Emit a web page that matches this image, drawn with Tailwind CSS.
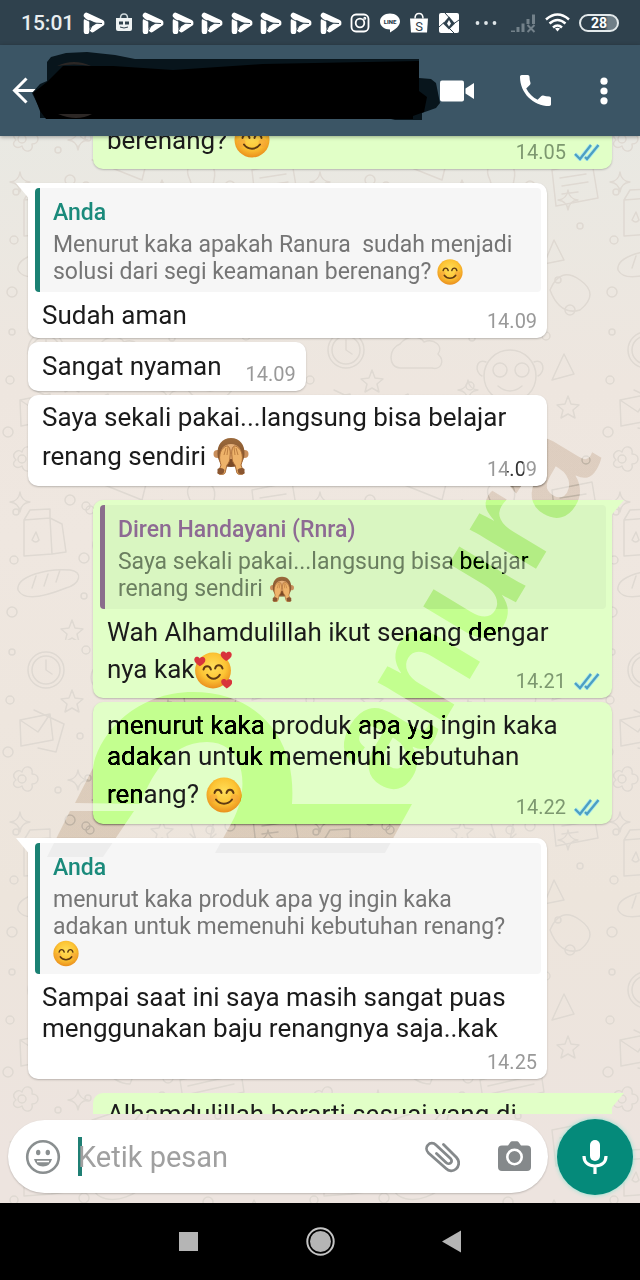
<!DOCTYPE html>
<html lang="id">
<head>
<meta charset="utf-8">
<meta name="viewport" content="width=device-width, initial-scale=1">
<title>Chat</title>
<script src="https://cdn.jsdelivr.net/npm/@tailwindcss/browser@4"></script>
</head>
<body class="relative flex h-screen flex-col overflow-hidden bg-[#efe7df] font-[Roboto,'Liberation_Sans',sans-serif] text-[26px] leading-[31px] text-[#1b1b1b]">

<!-- shared icons -->
<svg class="absolute size-0" aria-hidden="true">
  <defs>
    <radialGradient id="face" cx=".5" cy=".4" r=".6"><stop offset="0" stop-color="#ffdf5a"/><stop offset=".6" stop-color="#fcc434"/><stop offset="1" stop-color="#ea8f1d"/></radialGradient>
    <linearGradient id="fur" x1="0" y1="0" x2="0" y2="1"><stop offset="0" stop-color="#9b6a3c"/><stop offset="1" stop-color="#7a4a26"/></linearGradient>
    <symbol id="smile" viewBox="0 0 36 36">
      <circle cx="18" cy="18" r="17.5" fill="url(#face)"/>
      <circle cx="7.5" cy="21" r="4" fill="#f59a3c" opacity=".45"/><circle cx="28.5" cy="21" r="4" fill="#f59a3c" opacity=".45"/>
      <path d="M8.5 16c1-4.500 6-4.500 7 0M20.500 16c1-4.500 6-4.500 7 0M10 22.500c4 5.500 12 5.500 16 0" fill="none" stroke="#5f3a12" stroke-width="2" stroke-linecap="round"/>
    </symbol>
    <symbol id="love" viewBox="0 0 36 36">
      <circle cx="18" cy="18.500" r="17" fill="url(#face)"/>
      <path d="M9 17.500c1-4 6-4 7 0M20 16.500c1-4 6-4 7 0M12.500 22.500c3 5 9 5 12 0" fill="none" stroke="#5f3a12" stroke-width="1.900" stroke-linecap="round"/>
      <g fill="#d8343c"><path id="heart" d="M5.500 14.500C1 11.500-.5 9 .6 6.800c1.200-2 3.900-1.600 4.900.3 1.400-2 4.300-1.800 5.100.4.700 2.500-1.300 4.700-5.100 7z"/><use href="#heart" x="25" y="-5"/><use href="#heart" x="25.500" y="21"/></g>
    </symbol>
    <symbol id="monkey" viewBox="0 0 36 38">
      <circle cx="4.500" cy="17" r="4" fill="#c98f5c"/><circle cx="31.500" cy="17" r="4" fill="#c98f5c"/>
      <path d="M18 1C9 1 4 8 4.500 17c.3 7 4 13 13.500 13s13.200-6 13.500-13C32 8 27 1 18 1z" fill="url(#fur)"/>
      <path d="M18 7c-7 0-11 5-10 11 1 7 4 11 10 11s9-4 10-11c1-6-3-11-10-11z" fill="#e5b079"/>
      <path d="M15 22h6l3 7H12z" fill="#7a4a26"/>
      <path d="M17 20c1-8-1-11-3-11s-6 3-7 8 0 8 1 11l-3 8c1 2 6 2 7 0l2-8c2-2 3-5 3-8zM19 20c-1-8 1-11 3-11s6 3 7 8 0 8-1 11l3 8c-1 2-6 2-7 0l-2-8c-2-2-3-5-3-8z" fill="#eeb36a" stroke="#a86a35" stroke-width="1"/>
      <path d="M4.500 32c2-2 6-1 7 1l-1 3.500c-2 1-5 1-6 0zM31.500 32c-2-2-6-1-7 1l1 3.500c2 1 5 1 6 0z" fill="#8a5630"/>
      <path d="M11 18l2-7M14 18l1-8M25 18l-2-7M22 18l-1-8" stroke="#b8783c" stroke-width=".9"/>
    </symbol>
    <symbol id="ticks" viewBox="0 0 26 18">
      <path d="M1 11l5 5L17 2M11 14l2 2L24.500 2" fill="none" stroke="#a9e9ee" stroke-width="4"/>
      <path d="M1 11l5 5L17 2M11 14l2 2L24.500 2" fill="none" stroke="#4c9ec2" stroke-width="2.200"/>
    </symbol>
    <symbol id="play" viewBox="0 0 22 22">
      <path d="M3.500 3.500L18.500 10.500M3.500 9v10.500M18.500 11.500L9.500 17.500" fill="none" stroke="#fff" stroke-width="5.600" stroke-linecap="round" stroke-linejoin="round"/>
      <path d="M1 6.500l9 4.500-3 7M10 11l9 .5" fill="none" stroke="#2f414d" stroke-width="1"/>
    </symbol>
    <symbol id="tail-in" viewBox="0 0 14 18"><path d="M0 0h14v18Q12 14 10 12Z" fill="#fff"/></symbol>
    <symbol id="tail-out" viewBox="0 0 14 18"><path d="M14 0H0v18Q2 14 4 12Z" fill="#e1ffc7"/></symbol>
    <linearGradient id="paper" x1="0" y1="0" x2="0" y2="1"><stop offset=".1" stop-color="#e9e9e3"/><stop offset=".3" stop-color="#eee6df"/><stop offset=".42" stop-color="#efe7e0"/><stop offset=".7" stop-color="#ede5dc"/><stop offset=".9" stop-color="#ede4df"/></linearGradient>
    <pattern id="doodles" width="300" height="320" patternUnits="userSpaceOnUse">
      <g fill="none" stroke="#dfd9d2" stroke-width="1.500" stroke-linecap="round" stroke-linejoin="round">
        <circle cx="46" cy="30" r="18"/><circle cx="46" cy="30" r="14"/><path d="M46 20v10l6 4"/>
        <path d="M20 80l30-6 3 26-32 6zM20 80l18 12 12-18M34 70l30 14-8 28-18-4"/>
        <path d="M16 140c-6-6 2-12 6-8 2-8 12-6 10 2 8 0 8 10 0 10 2 8-8 10-10 2-6 4-12-2-6-6z"/><circle cx="22" cy="139" r="4"/>
        <path d="M24 200l26-2 2 36-28 2zM50 198l12 6 4 28-14 2M24 200l6-10 20-1v9M36 212l-4 8q4 4 7 0z"/>
        <path d="M18 270c-2-14 30-22 52-20 14 2 10 14-4 18-20 8-42 14-48 2zM32 268l4-12M44 266l4-12M56 262l4-12"/>
        <path d="M100 24c8-10 20-8 24-2 10-4 20 4 14 12 8 8 2 16-6 14H100c-12 0-12-20 0-24z"/>
        <path d="M96 80c-2 18 14 44 34 44l4-10-12-8-6 4c-4-4-8-12-10-18l6-4-4-14z"/>
        <path d="M150 96c-12-8-10-18-4-18 4 0 6 4 6 6 0-4 4-8 8-6 6 2 4 12-10 18z"/>
        <path d="M92 160l60-20-10 40zM92 160l40 4 20-24"/>
        <ellipse cx="120" cy="220" rx="28" ry="18" transform="rotate(-20 120 220)"/><ellipse cx="120" cy="220" rx="10" ry="5" transform="rotate(-20 120 220)"/>
        <path d="M96 290l40-14 6 20-40 16zM102 292l30-10M104 298l30-10"/>
        <circle cx="210" cy="56" r="26"/><circle cx="200" cy="50" r="7"/><circle cx="222" cy="50" r="7"/><path d="M198 66q12 10 24 0M186 42c-10-4-12 10-4 14M234 42c10-4 12 10 4 14"/>
        <path d="M180 120l60-14 4 26-60 14zM188 126l44-10M190 134l44-10"/>
        <path d="M190 180q-8-16 10-18 18 0 14 18l-4 20h-14zM202 200v20M190 194q12 14 26 0"/>
        <path d="M252 170l40-8 6 36-42 8zM260 178l26-4M262 186l26-4M262 194l16-2"/>
        <path d="M180 260c10-20 40-20 40 0 10 0 20 8 14 20h-48c-14 0-14-16-6-20zM196 280v24M220 280l6 24"/>
        <path d="M254 240l10 20-20 4zM264 34l10 20-22 6zM250 290q10-24 30-10t0 30q-20 6-30-20z"/>
        <path id="star" d="M72 50l3 8 8 1-6 5 2 8-7-4-7 4 2-8-6-5 8-1z"/><use href="#star" x="90" y="130"/><use href="#star" x="196" y="26"/><use href="#star" x="0" y="250"/>
        <path id="spark" d="M78 130q1 9 10 10-9 1-10 10-1-9-10-10 9-1 10-10z"/><use href="#spark" x="90" y="-70"/><use href="#spark" x="76" y="130"/><use href="#spark" x="190" y="60"/><use href="#spark" x="-58" y="42"/>
        <g id="dots"><circle cx="10" cy="60" r="4"/><circle cx="80" cy="96" r="3"/><circle cx="8" cy="112" r="5"/><circle cx="70" cy="180" r="5"/><circle cx="58" cy="150" r="3"/><circle cx="86" cy="10" r="4"/><circle cx="12" cy="12" r="3"/></g>
        <use href="#dots" x="76" y="126"/><use href="#dots" x="160" y="6"/><use href="#dots" x="200" y="130"/><use href="#dots" x="4" y="180"/>
      </g>
    </pattern>
  </defs>
</svg>

<!-- wallpaper -->
<svg class="absolute inset-0 h-full w-full" aria-hidden="true"><rect width="100%" height="100%" fill="url(#paper)"/><rect width="100%" height="100%" fill="url(#doodles)"/></svg>

<!-- status bar -->
<div class="relative z-10 flex h-[45px] shrink-0 items-center bg-[#2f414d] pr-[21px] pl-[21px] text-white">
  <span class="w-[62px] text-[21px] leading-6 font-medium text-[#e9eef0]">15:01</span>
  <div class="flex w-[377px] items-center justify-between">
    <svg class="size-[22px]"><use href="#play"/></svg>
    <svg class="size-[22px]" viewBox="0 0 22 22"><path d="M3 6h16v11q0 2-2 2H5q-2 0-2-2z" fill="#eef2f3"/><path d="M7.500 6q0-4 3.500-4t3.500 4" fill="none" stroke="#cfd8dc" stroke-width="1.500"/><path d="M6 9.500h4v3H6zM12 9.500h4v3h-4z" fill="#2f414d"/><path d="M7 15q4 2 8 0" fill="none" stroke="#2f414d" stroke-width="1"/></svg>
    <svg class="size-[22px]"><use href="#play"/></svg>
    <svg class="size-[22px]"><use href="#play"/></svg>
    <svg class="size-[22px]"><use href="#play"/></svg>
    <svg class="size-[22px]"><use href="#play"/></svg>
    <svg class="size-[22px]"><use href="#play"/></svg>
    <svg class="size-[22px]"><use href="#play"/></svg>
    <svg class="size-[22px]"><use href="#play"/></svg>
    <svg class="size-[22px]" viewBox="0 0 22 22" fill="none" stroke="#fff" stroke-width="1.800"><rect x="2.500" y="2.500" width="17" height="17" rx="4.500"/><circle cx="11" cy="11" r="4.300"/><circle cx="15.800" cy="6.200" r=".6"/></svg>
    <svg class="size-[22px]" viewBox="0 0 22 22"><path d="M11 1.500c5.500 0 10 3.500 10 8 0 4-4.500 8-10 11v-3C5.500 17.500 1 14 1 9.500s4.500-8 10-8z" fill="#fff"/><text x="11" y="12" text-anchor="middle" font-size="6" font-weight="900" fill="#2f414d">LINE</text></svg>
    <svg class="size-[22px]" viewBox="0 0 22 22"><path d="M2 6.500h18l-1 14H3z" fill="#fff"/><path d="M7 6.500q0-5 4-5t4 5" fill="none" stroke="#fff" stroke-width="1.500"/><text x="11" y="18.500" text-anchor="middle" font-size="13" fill="#2f414d">S</text></svg>
    <svg class="size-[22px]" viewBox="0 0 22 22"><rect x="1" y="1" width="20" height="20" rx="2" fill="#fff"/><path d="M11 4.500l6 7L11 17.500l-6-6z" fill="#2f414d"/><path d="M11 8l2 3.500-2 3-2-3z" fill="#fff"/><path d="M7 1l4.500 5M1 15l5-4.500M21 8l-5 3.500M16 21l-5-5" stroke="#2f414d" stroke-width="1"/></svg>
  </div>
  <div class="ml-auto flex items-center">
    <svg class="mr-[14px] h-1 w-[22px]" viewBox="0 0 22 4" fill="#dfe5e8"><circle cx="2.500" cy="2" r="1.900"/><circle cx="11" cy="2" r="1.900"/><circle cx="19.500" cy="2" r="1.900"/></svg>
    <svg class="mr-[9px] h-[20px] w-[25px]" viewBox="0 0 25 20" fill="#73818a"><path d="M0 17.500h4V19H0zM5.500 14h3v5h-3zM10.500 10.500h3V19h-3zM15.500 6h3v5h-3zM21 1.500h3V11h-3z"/><path d="M16.500 12l7 7M23.500 12l-7 7" stroke="#73818a" stroke-width="2"/></svg>
    <svg class="mr-[9px] h-[19px] w-[25px]" viewBox="0 0 25 19" fill="none" stroke="#fff" stroke-width="2.500"><path d="M1 6.500q11.500-10 23 0M4.500 10.500q8-7 16 0M8 14.500q4.500-4 9 0"/><path d="M12.500 18.500l-2.500-3q2.500-1.500 5 0z" fill="#fff" stroke="none"/></svg>
    <span class="flex h-[18px] w-[40px] items-center justify-center rounded-full border-2 border-[#e3e9eb] bg-linear-to-r from-transparent from-65% to-[#6f7e87] to-75% text-[14px] leading-4 font-bold">28</span>
  </div>
</div>

<!-- app bar -->
<header class="relative z-10 flex h-[91px] shrink-0 items-center bg-[#3b5565] pr-8 pl-[12px] text-white shadow-[0_1px_4px_rgba(0,0,0,0.35)]">
  <button class="w-5 shrink-0" aria-label="Kembali"><svg class="h-[27px] w-[28px]" viewBox="0 0 28 27" fill="none" stroke="#fff" stroke-width="3"><path d="M14.500 1.500L2.500 13.500l12 12M2.500 13.500H28"/></svg></button>
  <svg class="mb-2 h-[71px] w-[408px] shrink-0" viewBox="32 51 408 71" aria-hidden="true">
    <path d="M47 62l4-5 15-4 21-1 28 3 20 4h284v19l12 1 5 4 4 20-4 5-14 5v7h-27l-8-2H40v-9l-8-16 8-9 7-3z" fill="#08151c"/>
    <path d="M47 82l16-16h50l60 4 90-6 156-3v30l8 6-3 15-11 4v3H46l-6-8-7-18z" fill="#000"/>
    <path d="M57 66q17-8 34 0-17-3-34 0zM58 114h34q-15 8-34 0z" fill="#2c2725"/>
  </svg>
  <button class="shrink-0" aria-label="Panggilan video"><svg class="h-[24px] w-[34px]" viewBox="0 0 34 24" fill="#fff"><rect x="0" y="1.500" width="24" height="21" rx="2"/><path d="M34 4v16l-8.500-5.500v-5z"/></svg></button>
  <button class="ml-auto" aria-label="Panggilan suara"><svg class="size-[31px]" viewBox="3 3 18 18" fill="#fff"><path d="M6.620 10.790c1.440 2.830 3.760 5.140 6.590 6.590l2.200-2.200c.27-.27.67-.36 1.020-.24 1.120.37 2.330.57 3.570.57.550 0 1 .45 1 1V20c0 .55-.45 1-1 1-9.390 0-17-7.610-17-17 0-.55.45-1 1-1h3.500c.55 0 1 .45 1 1 0 1.250.2 2.450.57 3.570.11.350.03.740-.25 1.020l-2.200 2.200z"/></svg></button>
  <button class="ml-[49px]" aria-label="Menu lainnya"><svg class="h-[28px] w-2" viewBox="0 0 8 28" fill="#fff"><circle cx="4" cy="4.200" r="3.600"/><circle cx="4" cy="14" r="3.600"/><circle cx="4" cy="23.800" r="3.600"/></svg></button>
</header>

<!-- conversation -->
<main class="relative flex min-h-0 flex-1 flex-col items-start overflow-hidden px-7">
  <article class="-mt-[26px] flex h-[59px] w-8/9 shrink-0 flex-col self-end rounded-[10px] bg-[#e1ffc7] pt-2 pr-3 pl-[14px] shadow-[0_1px_2px_rgba(0,0,0,0.22)]">
    <div class="flex h-[44px] items-center"><p class="flex items-center gap-[7px]">berenang? <svg class="size-9"><use href="#smile"/></svg></p>
      <span class="ml-auto flex items-center gap-2 self-end"><time class="text-[20px] leading-5 text-[#7d9870]">14.05</time><svg class="h-[18px] w-[26px]"><use href="#ticks"/></svg></span></div>
  </article>

  <article class="relative mt-[14px] w-8/9 shrink-0 rounded-[10px] rounded-tl-none bg-white pt-[5px] pr-[6px] pb-[7px] pl-[7px] shadow-[0_1px_2px_rgba(0,0,0,0.22)]">
    <svg class="absolute top-0 -left-3 h-[18px] w-[14px]"><use href="#tail-in"/></svg>
    <blockquote class="rounded border-l-[5px] border-[#1b8173] bg-[#f6f6f6] pt-[11px] pb-[7px] pl-[13px] text-[23px] leading-[27px] text-[#757575]">
      <h2 class="mb-[5px] text-[23px] font-medium text-[#1a8a7b]">Anda</h2>
      <p>Menurut kaka apakah Ranura&nbsp; sudah menjadi</p>
      <p class="flex items-center gap-[6px]">solusi dari segi keamanan berenang? <svg class="size-[26px]"><use href="#smile"/></svg></p>
    </blockquote>
    <div class="mt-2 flex pr-1 pl-[7px]"><p>Sudah aman</p><time class="ml-auto self-end text-[20px] leading-5 text-[#999]">14.09</time></div>
  </article>

  <article class="mt-1 flex h-[49px] shrink-0 gap-6 rounded-[10px] bg-white pt-[9px] pr-[10px] pb-[7px] pl-[14px] shadow-[0_1px_2px_rgba(0,0,0,0.22)]">
    <p>Sangat nyaman</p><time class="self-end text-[20px] leading-5 text-[#999]">14.09</time>
  </article>

  <article class="mt-1 w-8/9 shrink-0 rounded-[10px] bg-white pt-[7px] pr-[10px] pb-[7px] pl-[14px] shadow-[0_1px_2px_rgba(0,0,0,0.22)]">
    <p>Saya sekali pakai...langsung bisa belajar</p>
    <div class="flex h-[46px] items-center"><p class="flex items-center gap-[7px]">renang sendiri <svg class="h-[38px] w-9"><use href="#monkey"/></svg></p><time class="ml-auto self-end text-[20px] leading-5 text-[#999]">14.09</time></div>
  </article>

  <article class="relative mt-[14px] w-8/9 shrink-0 self-end rounded-[10px] rounded-tr-none bg-[#e1ffc7] pt-[5px] pr-[6px] pb-[7px] pl-[7px] shadow-[0_1px_2px_rgba(0,0,0,0.22)]">
    <svg class="absolute top-0 -right-3 h-[18px] w-[14px]"><use href="#tail-out"/></svg>
    <blockquote class="rounded border-l-[5px] border-[#8a6d8c] bg-[#d9f6c1] pt-[11px] pb-[7px] pl-[13px] text-[23px] leading-[27px] text-[#6b7f60]">
      <h2 class="mb-[5px] text-[23px] font-medium text-[#8d6a93]">Diren Handayani (Rnra)</h2>
      <p>Saya sekali pakai...langsung bisa belajar</p>
      <p class="flex items-center gap-[6px]">renang sendiri <svg class="size-[26px]"><use href="#monkey"/></svg></p>
    </blockquote>
    <p class="mt-2 pl-[7px]">Wah Alhamdulillah ikut senang dengar</p>
    <div class="flex h-[43px] items-center pr-[6px] pl-[7px]"><p class="flex items-center">nya kak<svg class="size-[38px]"><use href="#love"/></svg></p>
      <span class="ml-auto flex items-center gap-2 self-end"><time class="text-[20px] leading-5 text-[#7d9870]">14.21</time><svg class="h-[18px] w-[26px]"><use href="#ticks"/></svg></span></div>
  </article>

  <article class="mt-1 w-8/9 shrink-0 self-end rounded-[10px] bg-[#e1ffc7] pt-2 pr-3 pb-[7px] pl-[14px] shadow-[0_1px_2px_rgba(0,0,0,0.22)]">
    <p>menurut kaka produk apa yg ingin kaka adakan untuk memenuhi kebutuhan</p>
    <div class="flex h-[45px] items-center"><p class="flex items-center gap-[7px]">renang? <svg class="size-9"><use href="#smile"/></svg></p>
      <span class="ml-auto flex items-center gap-2 self-end"><time class="text-[20px] leading-5 text-[#7d9870]">14.22</time><svg class="h-[18px] w-[26px]"><use href="#ticks"/></svg></span></div>
  </article>

  <article class="relative mt-[14px] w-8/9 shrink-0 rounded-[10px] rounded-tl-none bg-white pt-[5px] pr-[6px] pb-[7px] pl-[7px] shadow-[0_1px_2px_rgba(0,0,0,0.22)]">
    <svg class="absolute top-0 -left-3 h-[18px] w-[14px]"><use href="#tail-in"/></svg>
    <blockquote class="rounded border-l-[5px] border-[#1b8173] bg-[#f6f6f6] pt-[11px] pb-[7px] pl-[13px] text-[23px] leading-[27px] text-[#757575]">
      <h2 class="mb-[5px] text-[23px] font-medium text-[#1a8a7b]">Anda</h2>
      <p>menurut kaka produk apa yg ingin kaka<br>adakan untuk memenuhi kebutuhan renang?</p>
      <svg class="h-[27px] w-[26px]"><use href="#smile"/></svg>
    </blockquote>
    <p class="mt-2 pl-[7px]">Sampai saat ini saya masih sangat puas<br>menggunakan baju renangnya saja..kak</p>
    <div class="flex h-7 items-end justify-end pr-1"><time class="text-[20px] leading-5 text-[#999]">14.25</time></div>
  </article>

  <article class="relative mt-[14px] w-8/9 shrink-0 self-end rounded-[10px] rounded-tr-none bg-[#e1ffc7] pt-[6px] pr-3 pb-[7px] pl-[14px]">
    <svg class="absolute top-0 -right-3 h-[18px] w-[14px]"><use href="#tail-out"/></svg>
    <p>Alhamdulillah berarti sesuai yang di</p>
  </article>

  <!-- brand watermark burned over the bubbles -->
  <svg class="pointer-events-none absolute top-0 left-0 h-[760px] w-[640px] mix-blend-color-burn" viewBox="0 136 640 760" fill="#808080" aria-hidden="true">
    <path d="M75 803L93 768C98 735 135 692 193 692C255 692 297 735 292 804H412L385 853H215L232 822C252 785 243 742 207 742C165 742 148 785 140 804zM70 811H134L103 857H47z"/>
    <text transform="translate(397 800) rotate(-59)" font-family="Liberation Sans" font-weight="700" font-size="146">anura</text>
  </svg>
</main>

<!-- composer -->
<form class="relative flex h-[89px] shrink-0 items-center gap-[9px] pr-[7px] pb-1 pl-2">
  <div class="flex h-[73px] min-w-0 flex-1 items-center rounded-full bg-white pr-[17px] pl-[17px] shadow-[0_1px_2px_rgba(0,0,0,0.2)]">
    <button type="button" class="shrink-0" aria-label="Emoji"><svg class="size-9" viewBox="0 0 36 36"><circle cx="18" cy="18" r="15.800" fill="none" stroke="#8a8f90" stroke-width="2.600"/><ellipse cx="13.200" cy="13.500" rx="2.200" ry="2.800" fill="#8a8f90"/><ellipse cx="22.800" cy="13.500" rx="2.200" ry="2.800" fill="#8a8f90"/><path d="M9 20h18q-2 7.500-9 7.500T9 20z" fill="#8a8f90"/><path d="M12 22.500h12" stroke="#fff" stroke-width="1.500"/></svg></button>
    <span class="ml-[17px] h-[39px] w-1 shrink-0 bg-[#1f7f74]"></span>
    <label class="sr-only" for="message">Pesan</label>
    <input id="message" class="-ml-1 min-w-0 flex-1 bg-transparent text-[29px] leading-9 outline-none placeholder:text-[#a0a0a0]" placeholder="Ketik pesan">
    <button type="button" class="mr-[38px] shrink-0" aria-label="Lampirkan"><svg class="h-[32px] w-[35px]" viewBox="0 0 35 32" fill="none" stroke="#85898b" stroke-width="2.800" stroke-linecap="round"><path d="M18.500 3.500L31.500 16.500C35 20.500 34 25.500 31 28C28 30.500 24 30.500 21 27.500L3.500 12C1 9.500 1 6 3 4C5 1.500 8.500 1.500 11 4L25.500 17.500C27 19 27 21 25.500 22C24.500 23 22.500 23 21 21.500L11.500 12.500"/></svg></button>
    <button type="button" class="shrink-0" aria-label="Kamera"><svg class="h-[31px] w-[33px]" viewBox="0 0 33 31"><path d="M4 4.500h6L12.500 1q.5-.8 1.500-.8h5q1 0 1.500.8L23 4.500h6q4 0 4 4V26q0 4-4 4H4q-4 0-4-4V8.500q0-4 4-4z" fill="#85898b"/><circle cx="16.500" cy="16" r="7.200" fill="#85898b" stroke="#fff" stroke-width="2.600"/></svg></button>
  </div>
  <button type="button" class="flex size-[76px] shrink-0 items-center justify-center rounded-full bg-[#058a7a] shadow-[0_0_4px_rgba(120,225,205,0.9)]" aria-label="Rekam suara"><svg class="h-[34px] w-[26px]" viewBox="0 0 26 34"><rect x="8" y="0" width="10" height="21" rx="5" fill="#fff"/><path d="M2 16c0 7 5 10 11 10s11-3 11-10M13 26v8" fill="none" stroke="#fff" stroke-width="3.200"/></svg></button>
</form>

<!-- system navigation -->
<nav class="relative flex h-[77px] shrink-0 items-center justify-center gap-[103px] bg-black">
  <button aria-label="Aplikasi terkini"><svg class="size-[29px]" viewBox="0 0 29 29"><rect x="5" y="5" width="19" height="19" fill="#b5b5b5"/></svg></button>
  <button aria-label="Beranda"><svg class="size-[29px]" viewBox="0 0 29 29"><circle cx="14.500" cy="14.500" r="13.200" fill="none" stroke="#c4c4c4" stroke-width="2"/><circle cx="14.500" cy="14.500" r="10.500" fill="#b5b5b5"/></svg></button>
  <button aria-label="Kembali ke layar sebelumnya"><svg class="size-[29px]" viewBox="0 0 29 29"><path d="M4 14.500L23 3.500v22z" fill="#b5b5b5"/></svg></button>
</nav>
</body>
</html>
